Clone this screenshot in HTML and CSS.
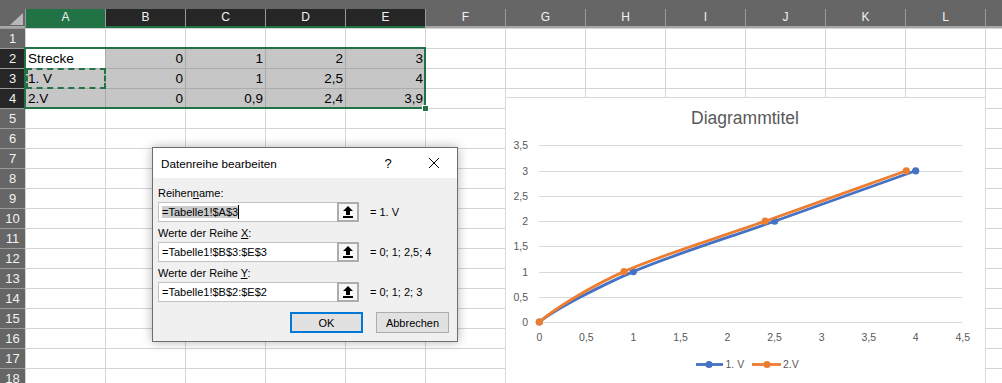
FILE: index.html
```html
<!DOCTYPE html>
<html lang="de">
<head>
  <meta charset="UTF-8" />
  <title>Datenreihe bearbeiten</title>
  <link rel="stylesheet" href="styles.css">
</head>
<body>

  <div class="topbar"></div>

  <div class="colheads">
    <div class="corner"></div>
    <div class="colhead active">A</div>
    <div class="colhead sel">B</div>
    <div class="colhead sel">C</div>
    <div class="colhead sel">D</div>
    <div class="colhead sel">E</div>
    <div class="colhead">F</div>
    <div class="colhead">G</div>
    <div class="colhead">H</div>
    <div class="colhead">I</div>
    <div class="colhead">J</div>
    <div class="colhead">K</div>
    <div class="colhead">L</div>
    <div class="colhead rest"></div>
  </div>

  <div class="main">
    <div class="rowheads">
      <div class="rowhead">1</div>
      <div class="rowhead sel">2</div>
      <div class="rowhead sel">3</div>
      <div class="rowhead sel">4</div>
      <div class="rowhead">5</div>
      <div class="rowhead">6</div>
      <div class="rowhead">7</div>
      <div class="rowhead">8</div>
      <div class="rowhead">9</div>
      <div class="rowhead">10</div>
      <div class="rowhead">11</div>
      <div class="rowhead">12</div>
      <div class="rowhead">13</div>
      <div class="rowhead">14</div>
      <div class="rowhead">15</div>
      <div class="rowhead">16</div>
      <div class="rowhead">17</div>
      <div class="rowhead">18</div>
    </div>

    <div class="cells">
      <div class="data">
        <div class="cell">Strecke</div>
        <div class="cell num sel">0</div>
        <div class="cell num sel">1</div>
        <div class="cell num sel">2</div>
        <div class="cell num sel">3</div>

        <div class="cell sel">1. V</div>
        <div class="cell num sel">0</div>
        <div class="cell num sel">1</div>
        <div class="cell num sel">2,5</div>
        <div class="cell num sel">4</div>

        <div class="cell sel">2.V</div>
        <div class="cell num sel">0</div>
        <div class="cell num sel">0,9</div>
        <div class="cell num sel">2,4</div>
        <div class="cell num sel">3,9</div>
      </div>
    </div>
  </div>

  <!-- Auswahl und Kopierrahmen -->
  <div class="selection"><span class="handle"></span></div>
  <div class="marquee"></div>

  <!-- Diagramm -->
  <div class="chart">
    <svg width="481" height="290" viewBox="0 0 481 290">
      <rect x="0.5" y="0.5" width="480" height="300" fill="#fff" stroke="#d9d9d9" />
      <text class="chart-title" x="240" y="27" text-anchor="middle">Diagrammtitel</text>

      <g stroke="#d9d9d9" stroke-width="1">
        <line x1="34" y1="225.5" x2="457" y2="225.5" />
        <line x1="34" y1="200.5" x2="457" y2="200.5" />
        <line x1="34" y1="175.5" x2="457" y2="175.5" />
        <line x1="34" y1="149.5" x2="457" y2="149.5" />
        <line x1="34" y1="124.5" x2="457" y2="124.5" />
        <line x1="34" y1="99.5" x2="457" y2="99.5" />
        <line x1="34" y1="74.5" x2="457" y2="74.5" />
        <line x1="34" y1="48.5" x2="457" y2="48.5" />
      </g>

      <g class="axis" text-anchor="end">
        <text x="23" y="229">0</text>
        <text x="23" y="203.5">0,5</text>
        <text x="23" y="178.5">1</text>
        <text x="23" y="153">1,5</text>
        <text x="23" y="128">2</text>
        <text x="23" y="102.5">2,5</text>
        <text x="23" y="77.5">3</text>
        <text x="23" y="52">3,5</text>
      </g>

      <g class="axis" text-anchor="middle">
        <text x="34.3" y="244">0</text>
        <text x="81.4" y="244">0,5</text>
        <text x="128.4" y="244">1</text>
        <text x="175.5" y="244">1,5</text>
        <text x="222.5" y="244">2</text>
        <text x="269.6" y="244">2,5</text>
        <text x="316.6" y="244">3</text>
        <text x="363.7" y="244">3,5</text>
        <text x="410.7" y="244">4</text>
        <text x="457.8" y="244">4,5</text>
      </g>

      <!-- 1. V -->
      <path d="M34.3 225 C52.3 211 97.4 188 128.4 174.6 C167.6 157.8 222.5 141 269.6 124.2 C316.6 107.4 387.2 82.2 410.7 73.8"
            fill="none" stroke="#4472c4" stroke-width="2.8" stroke-linecap="round" />
      <g fill="#4472c4">
        <circle cx="34.3" cy="225" r="3.6" />
        <circle cx="128.4" cy="174.6" r="3.6" />
        <circle cx="269.6" cy="124.2" r="3.6" />
        <circle cx="410.7" cy="73.8" r="3.6" />
      </g>

      <!-- 2.V -->
      <path d="M34.3 225 C51.3 210.5 89 187.8 119 174.6 C156.6 157.8 213.1 141 260.1 124.2 C307.2 107.4 377.8 82.2 401.3 73.8"
            fill="none" stroke="#ed7d31" stroke-width="2.8" stroke-linecap="round" />
      <g fill="#ed7d31">
        <circle cx="34.3" cy="225" r="3.6" />
        <circle cx="119" cy="174.6" r="3.6" />
        <circle cx="260.1" cy="124.2" r="3.6" />
        <circle cx="401.3" cy="73.8" r="3.6" />
      </g>

      <!-- Legende -->
      <line x1="191" y1="267.5" x2="218" y2="267.5" stroke="#4472c4" stroke-width="2.8" />
      <circle cx="204" cy="267.5" r="3.6" fill="#4472c4" />
      <text class="axis" x="220.5" y="271">1. V</text>
      <line x1="247" y1="267.5" x2="276" y2="267.5" stroke="#ed7d31" stroke-width="2.8" />
      <circle cx="262" cy="267.5" r="3.6" fill="#ed7d31" />
      <text class="axis" x="278" y="271">2.V</text>
    </svg>
  </div>

  <!-- Dialog -->
  <div class="dialog">
    <div class="dlg-title">
      <span class="dlg-caption">Datenreihe bearbeiten</span>
      <span class="dlg-btn help">?</span>
      <span class="dlg-btn">
        <svg width="10" height="10" viewBox="0 0 10 10"><path d="M0 0L10 10M10 0L0 10" stroke="#000" stroke-width="1" /></svg>
      </span>
    </div>

    <div class="dlg-body">
      <div class="dlg-label">Reihen<u>n</u>ame:</div>
      <div class="dlg-row">
        <div class="ref-input"><span class="picked">=Tabelle1!$A$3</span><span class="caret"></span></div>
        <div class="ref-btn">
          <svg width="10" height="12" viewBox="0 0 10 12"><path d="M5 0L10 5H7V9H3V5H0Z" /><rect y="10" width="10" height="2" /></svg>
        </div>
        <span class="ref-value">= 1. V</span>
      </div>

      <div class="dlg-label">Werte der Reihe <u>X</u>:</div>
      <div class="dlg-row">
        <div class="ref-input">=Tabelle1!$B$3:$E$3</div>
        <div class="ref-btn">
          <svg width="10" height="12" viewBox="0 0 10 12"><path d="M5 0L10 5H7V9H3V5H0Z" /><rect y="10" width="10" height="2" /></svg>
        </div>
        <span class="ref-value">= 0; 1; 2,5; 4</span>
      </div>

      <div class="dlg-label">Werte der Reihe <u>Y</u>:</div>
      <div class="dlg-row">
        <div class="ref-input">=Tabelle1!$B$2:$E$2</div>
        <div class="ref-btn">
          <svg width="10" height="12" viewBox="0 0 10 12"><path d="M5 0L10 5H7V9H3V5H0Z" /><rect y="10" width="10" height="2" /></svg>
        </div>
        <span class="ref-value">= 0; 1; 2; 3</span>
      </div>

      <div class="dlg-actions">
        <button class="btn default">OK</button>
        <button class="btn">Abbrechen</button>
      </div>
    </div>
  </div>

</body>
</html>
```

FILE: styles.css
```css
* {
  box-sizing: border-box;
}

html, body {
  margin: 0;
  width: 1002px;
  height: 383px;
  overflow: hidden;
}

body {
  position: relative;
  font-family: 'Liberation Sans', Arial, sans-serif;
  background: #ffffff;
}

/* KOPFZEILEN */
.topbar {
  height: 9px;
  background: #666666;
}

.colheads {
  display: flex;
  height: 19px;
  background: #666666;
}

.corner {
  position: relative;
  width: 25px;
  flex: none;
  border-bottom: 2px solid #a6a6a6;
}

.corner::after {
  content: "";
  position: absolute;
  right: 2px;
  bottom: 1px;
  width: 0;
  height: 0;
  border-left: 13px solid transparent;
  border-bottom: 12px solid #b8b8b8;
}

.colhead {
  width: 80px;
  flex: none;
  border-left: 1px solid #9a9a9a;
  border-bottom: 2px solid #a6a6a6;
  color: #f2f2f2;
  font-size: 12px;
  line-height: 17px;
  text-align: center;
}

.colhead.active {
  background: #217346;
  border-bottom-color: #217346;
}

.colhead.sel {
  background: #262626;
  border-bottom-color: #217346;
}

.colhead.rest {
  flex: 1;
}

.main {
  display: flex;
  height: 355px;
}

.rowheads {
  width: 25px;
  flex: none;
  background: #666666;
}

.rowhead {
  height: 20px;
  border-top: 1px solid #9a9a9a;
  color: #f2f2f2;
  font-size: 13px;
  line-height: 19px;
  text-align: center;
}

.rowhead.sel {
  background: #262626;
}

/* ZELLEN */
.cells {
  flex: 1;
  background-color: #ffffff;
  background-image:
    linear-gradient(to right, #d4d4d4 1px, transparent 1px),
    linear-gradient(to bottom, #d4d4d4 1px, transparent 1px);
  background-size: 80px 20px;
}

.data {
  display: grid;
  grid-template-columns: repeat(5, 80px);
  grid-auto-rows: 20px;
  margin-top: 20px;
}

.cell {
  border-left: 1px solid #d4d4d4;
  border-top: 1px solid #d4d4d4;
  padding: 0 2px;
  font-size: 13.5px;
  line-height: 19px;
  color: #000000;
  white-space: nowrap;
  overflow: hidden;
}

.cell.sel {
  background: #c6c6c6;
  border-color: #ababab;
}

.cell.num {
  text-align: right;
}

.selection {
  position: absolute;
  left: 24px;
  top: 47px;
  width: 402px;
  height: 62px;
  border: 2px solid #217346;
}

.handle {
  position: absolute;
  right: -5px;
  bottom: -5px;
  width: 7px;
  height: 7px;
  background: #217346;
  border: 1px solid #ffffff;
}

.marquee {
  position: absolute;
  left: 26px;
  top: 68px;
  width: 80px;
  height: 21px;
  border: 2px dashed #217346;
}

/* DIAGRAMM */
.chart {
  position: absolute;
  left: 505px;
  top: 97px;
  width: 481px;
  height: 290px;
}

.chart svg {
  display: block;
}

.chart text {
  font-family: 'Liberation Sans', Arial, sans-serif;
  fill: #595959;
}

.chart-title {
  font-size: 17.5px;
}

.axis {
  font-size: 10.5px;
}

/* DIALOG */
.dialog {
  position: absolute;
  left: 152px;
  top: 147px;
  width: 306px;
  height: 195px;
  display: flex;
  flex-direction: column;
  background: #f0f0f0;
  border: 1px solid #6e6e6e;
  box-shadow: 0 0 10px rgba(0, 0, 0, 0.3);
  color: #000000;
}

.dlg-title {
  display: flex;
  align-items: center;
  height: 30px;
  flex: none;
  background: #ffffff;
}

.dlg-caption {
  flex: 1;
  padding-left: 8px;
  font-size: 11.7px;
}

.dlg-btn {
  display: flex;
  align-items: center;
  justify-content: center;
  width: 46px;
  height: 30px;
}

.dlg-btn.help {
  font-size: 13px;
}

.dlg-body {
  padding: 4px 8px 0 5px;
  font-size: 11px;
}

.dlg-label {
  height: 20px;
  line-height: 22px;
}

.dlg-row {
  display: flex;
  align-items: center;
  height: 20px;
}

.ref-input {
  display: flex;
  align-items: center;
  width: 179px;
  height: 20px;
  padding: 0 3px;
  background: #ffffff;
  border: 1px solid #c2c2c2;
  border-right: none;
  white-space: nowrap;
}

.picked {
  background: #cccccc;
}

.caret {
  width: 1px;
  height: 14px;
  background: #000000;
}

.ref-btn {
  display: flex;
  align-items: center;
  justify-content: center;
  width: 22px;
  height: 20px;
  background: #f7f7f7;
  border: 2px solid #adadad;
}

.ref-value {
  margin-left: 11px;
  white-space: nowrap;
}

.dlg-actions {
  display: flex;
  justify-content: flex-end;
  gap: 13px;
  margin-top: 10px;
}

.btn {
  width: 73px;
  height: 21px;
  padding: 0;
  font-family: 'Liberation Sans', Arial, sans-serif;
  font-size: 11px;
  color: #000000;
  background: #e1e1e1;
  border: 1px solid #adadad;
}

.btn.default {
  border: 2px solid #0078d7;
}
```
